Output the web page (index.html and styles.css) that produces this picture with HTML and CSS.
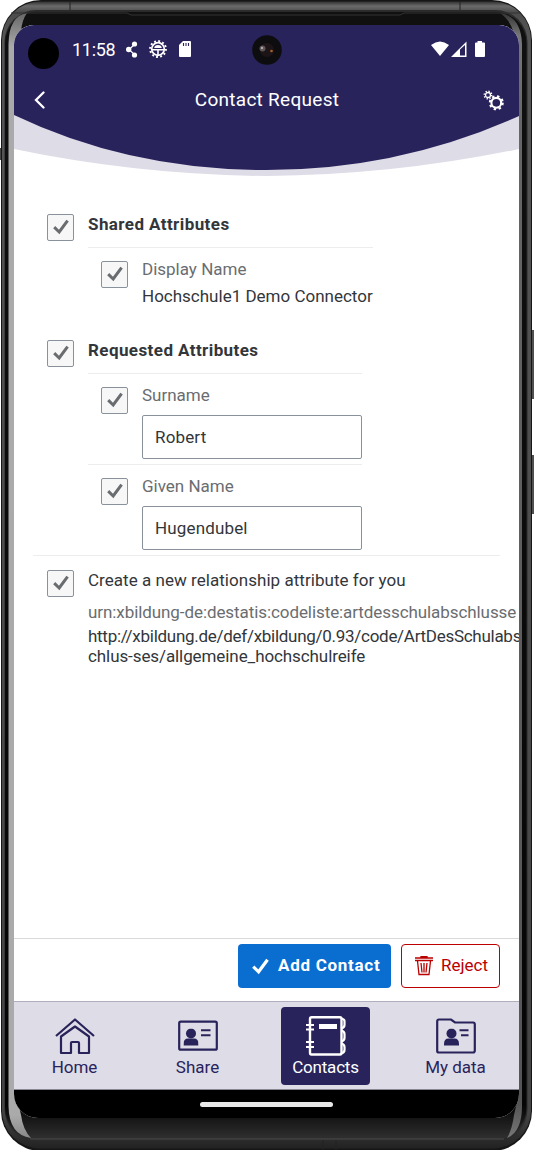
FILE: index.html
```html
<!DOCTYPE html>
<html lang="en">
<head>
<meta charset="utf-8">
<title>Contact Request</title>
<link rel="stylesheet" href="styles.css">
</head>
<body>
<svg width="0" height="0" class="defs" aria-hidden="true">
  <defs>
    <symbol id="check" viewBox="0 0 16 16"><path d="M1.200 8.200L6.200 13L14.600 1.600" fill="none" stroke="currentColor" stroke-width="3"/></symbol>
    <symbol id="person" viewBox="0 0 15 18"><circle cx="7.500" cy="5" r="5"/><path d="M0 17v-1.500q0-5.500 4.500-5.500h6q4.500 0 4.500 5.500v1.500z"/></symbol>
  </defs>
</svg>
<div class="phone">
  <svg class="frame" width="534" height="1150" viewBox="0 0 534 1150" aria-hidden="true">
    <defs>
      <linearGradient id="rim" x1="0" y1="0" x2="0" y2="1"><stop offset="0" stop-color="#303030"/><stop offset=".004" stop-color="#6b6b6b"/><stop offset=".009" stop-color="#4c4c4c"/><stop offset=".03" stop-color="#555"/><stop offset=".97" stop-color="#444"/><stop offset="1" stop-color="#222"/></linearGradient>
      <linearGradient id="base" x1="0" y1="0" x2="0" y2="1"><stop offset="0" stop-color="#101010"/><stop offset=".97" stop-color="#050505"/><stop offset="1" stop-color="#303030"/></linearGradient>
      <linearGradient id="glintL" x1="0" y1="0" x2="0" y2="1"><stop offset="0" stop-color="#666"/><stop offset=".03" stop-color="#aaa"/><stop offset=".98" stop-color="#aaa"/><stop offset="1" stop-color="#888"/></linearGradient>
      <linearGradient id="glintR" x1="0" y1="0" x2="0" y2="1"><stop offset="0" stop-color="#333"/><stop offset=".02" stop-color="#777"/><stop offset=".1" stop-color="#666"/><stop offset=".97" stop-color="#555"/><stop offset="1" stop-color="#777"/></linearGradient>
    </defs>
    <path d="M531 330h3v69h-3zM531 455h3v59h-3z" fill="#505050"/>
    <rect x="0" y="148" width="2" height="12" fill="#444"/>
    <rect x="1" y="0" width="531" height="1151" rx="40" fill="#161616"/>
    <rect x="2" y="1.500" width="529" height="1147" rx="38" fill="url(#rim)"/>
    <rect x="4.500" y="10" width="523" height="1131" rx="32" fill="#2b2b2b"/>
    <rect x="5" y="12" width="521.500" height="1127" rx="31" fill="url(#base)"/>
    <path d="M8.500 44Q9 16 27 13Q22 20 21 31L18 46V1102L21 1115Q23 1130 31 1138Q9 1135 8.500 1106z" fill="url(#glintL)"/>
    <path d="M522 44Q521 16 500 13Q510 20 513 31L517 46V1102L514 1115Q512 1130 507 1138Q522 1132 522 1106z" fill="url(#glintR)"/>
    <path d="M11 13H127L131 15H400L404 13H520" fill="none" stroke="#333"/>
    <path d="M70 2V10M460 2V10M323 1140V1150M336 1140V1150" stroke="#222"/>
    <path d="M30 1139H504" stroke="#4a4a4a"/>
  </svg>
  <main class="screen">
    <header class="top">
      <svg class="curve" width="505" height="152" viewBox="0 0 505 152" aria-hidden="true">
        <path d="M0 0H505V124Q380 150 252.500 151Q125 150 0 124z" fill="#dedce6"/>
        <path d="M0 0H505V91Q385 145 252.500 145Q115 145 0 90z" fill="#29235c"/>
      </svg>
      <div class="status">
        <i class="cutout"></i>
        <span class="clock">11:58</span>
        <svg class="st-share" width="12" height="17" viewBox="0 0 12 17" fill="#fff"><path d="M9 3L3 8.500L9 14" stroke="#fff" stroke-width="1.200" fill="none"/><circle cx="8.500" cy="3" r="2.600"/><circle cx="2.700" cy="8.500" r="2.700"/><circle cx="8.500" cy="14" r="2.600"/></svg>
        <svg class="st-bug" width="18" height="18" viewBox="0 0 18 18" fill="none" stroke="#fff"><circle cx="9" cy="9" r="7.900" stroke-width="2" stroke-dasharray="1.900 2.236"/><circle cx="9" cy="9" r="6.300" stroke-width="1.700"/><path d="M3 9.700H15M9 10V15" stroke-width="1.600"/><path d="M5.200 7.900q.3-2.900 3.800-2.900t3.800 2.900z" fill="#fff" stroke="none"/></svg>
        <svg class="st-card" width="12" height="16" viewBox="0 0 12 16"><path d="M4 0H11Q12 0 12 1V15Q12 16 11 16H1Q0 16 0 15V4z" fill="#fff"/><path d="M4.500 2V5M7 2V5M9.500 2V5" stroke="#29235c" stroke-width="1.100"/></svg>
        <svg class="camera" width="30" height="30" viewBox="0 0 30 30"><circle cx="15" cy="15" r="14.800" fill="#0d0d10"/><circle cx="15" cy="15" r="7" fill="#1d1417"/><circle cx="10.500" cy="13.500" r="3" fill="#5d5456"/><circle cx="10" cy="13" r="1.200" fill="#aaa"/><circle cx="19.500" cy="16" r="1.300" fill="#a66226"/></svg>
        <svg class="st-right" width="55" height="17" viewBox="0 0 55 17" fill="#fff"><path d="M0 4Q9-3 18 4L9 15z"/><path d="M20 16L35.500 .500V16zM29 8.500V14.500H34V4z" fill-rule="evenodd"/><path d="M46.500 0H51V1.500H53Q54 1.500 54 2.500V15Q54 16 53 16H45Q44 16 44 15V2.500Q44 1.500 45 1.500H46.500z"/></svg>
      </div>
      <div class="title">
        <svg width="12" height="18" viewBox="0 0 12 18"><path d="M9.500 1.500L2 9L9.500 16.500" fill="none" stroke="#fff" stroke-width="2.300" stroke-linecap="round"/></svg>
        <h1>Contact Request</h1>
        <svg width="21" height="21" viewBox="0 0 21 21" fill="none" stroke="#fff"><circle cx="5" cy="5" r="2.500" stroke-width="1.300"/><circle cx="5" cy="5" r="3.700" stroke-width="1.600" stroke-dasharray="1.300 1.606"/><circle cx="13.300" cy="12.800" r="4.900" stroke-width="2.100"/><circle cx="13.300" cy="12.800" r="6.500" stroke-width="2" stroke-dasharray="2.400 2.705"/></svg>
      </div>
    </header>
    <section class="content">
      <div class="row shared"><span class="box"><svg><use href="#check"/></svg></span><b>Shared Attributes</b></div>
      <div class="sub sub-shared">
        <div class="item"><span class="box"><svg><use href="#check"/></svg></span><div><label>Display Name</label><p>Hochschule1 Demo Connector</p></div></div>
      </div>
      <div class="row requested"><span class="box"><svg><use href="#check"/></svg></span><b>Requested Attributes</b></div>
      <div class="sub sub-req">
        <div class="item"><span class="box"><svg><use href="#check"/></svg></span><div><label>Surname</label><div class="input">Robert</div></div></div>
        <div class="item second"><span class="box"><svg><use href="#check"/></svg></span><div><label>Given Name</label><div class="input">Hugendubel</div></div></div>
      </div>
      <div class="relation">
        <span class="box"><svg><use href="#check"/></svg></span>
        <div class="rel-text">
          <p class="create">Create a new relationship attribute for you</p>
          <p class="urn">urn:xbildung-de:destatis:codeliste:artdesschulabschlusse</p>
          <p class="url"><span class="url-start">http://xbildung.de/def/xbildung/0.93/code/ArtDesSchulabs</span><br><span class="url-end">chlus-ses/allgemeine_hochschulreife</span></p>
        </div>
      </div>
    </section>
    <div class="actions">
      <div class="btn primary"><svg width="17" height="17"><use href="#check"/></svg><span>Add Contact</span></div>
      <div class="btn reject"><svg width="18" height="20" viewBox="0 0 18 20" fill="none" stroke="currentColor" stroke-width="1.300"><path d="M0 2H18M6 2V.7H12V2M0 4.500H18M2.500 5L4 18.500H14L15.500 5M6 7L7 16.500M9 7V16.500M12 7L11 16.500"/></svg><span>Reject</span></div>
    </div>
    <nav class="tabs">
      <div class="tab home"><svg width="40" height="40" viewBox="0 0 40 40" fill="none" stroke="currentColor" stroke-width="2.200" stroke-linejoin="round"><path d="M1 20L20 3.500L39 20"/><path d="M6 37V20.500L20 10.500L34 20.500V37H24V27Q24 26 23 26H17Q16 26 16 27V37z"/></svg><span>Home</span></div>
      <div class="tab share"><svg width="40" height="40" viewBox="0 0 40 40" fill="currentColor"><rect x="1.200" y="5.700" width="37.600" height="28" rx="1.500" fill="none" stroke="currentColor" stroke-width="2.200"/><use href="#person" x="5.500" y="12.500" width="15" height="18"/><path d="M23 14.200H32.500M23 19.300H32.500" stroke="currentColor" stroke-width="2.100"/></svg><span>Share</span></div>
      <div class="tab contacts"><svg width="40" height="40" viewBox="0 0 40 40" fill="none" stroke="currentColor" stroke-width="2.400"><path d="M4 36.500V3Q4 1.200 5.500 1.200H34Q35.500 1.200 35.500 3V36.500Q35.500 38.500 34 38.500H5.500Q4 38.500 4 36.500z"/><path d="M35 2.500Q38.500 3 38.500 5V9Q38.500 12 35 12.500M35 14.500Q38.500 15 38.500 18V22Q38.500 25 35 25.500M35 27.500Q38.500 28 38.500 31V34Q38.500 37 35 37.500" stroke-width="2.200"/><path d="M0 9H8M0 13.500H8M0 26H8M0 31H8" stroke-width="2"/><path d="M13 10.500H31" stroke-width="5"/></svg><span>Contacts</span></div>
      <div class="tab data"><svg width="40" height="40" viewBox="0 0 40 40" fill="currentColor"><path d="M1.200 35V5.500Q1.200 3.500 3 3.500H15L19 6.500H37Q38.800 6.500 38.800 8.500V34.500Q38.800 36.500 37 36.500H3Q1.200 36.500 1.200 35z" fill="none" stroke="currentColor" stroke-width="2.200"/><use href="#person" x="8" y="12.500" width="15" height="18"/><path d="M23.500 14.200H32.500M25 19.300H32.500" stroke="currentColor" stroke-width="2.100"/></svg><span>My data</span></div>
    </nav>
    <footer class="gesture"><i></i></footer>
  </main>
</div>
</body>
</html>
```
FILE: styles.css
```css
* { box-sizing: border-box; }
body { margin: 0; background: #fff; font: 17px/22px Roboto, "Noto Sans", sans-serif; color: #32363a; }
p, h1 { margin: 0; }
.defs { position: absolute; }
.phone { position: relative; width: 534px; height: 1150px; padding: 25px 15px 32px 14px; overflow: hidden; }
.frame { position: absolute; left: 0; top: 0; }
.screen { position: relative; height: 1093px; display: flex; flex-direction: column; background: #fff; border-radius: 20px 20px 24px 24px; overflow: hidden; white-space: nowrap; }
.top { height: 152px; position: relative; color: #fff; }
.curve { position: absolute; left: 0; top: 0; }
.status { position: relative; display: flex; height: 50px; }
.cutout { width: 31px; height: 31px; border-radius: 50%; background: #000; margin: 13px 0 0 14px; }
.clock { margin: 13px 0 0 13px; font: 18px/24px Roboto, sans-serif; letter-spacing: -.3px; width: 43px; }
.st-share { margin: 16px 0 0 11px; }
.st-bug { margin: 15px 0 0 11px; }
.st-card { margin: 16px 0 0 12px; }
.camera { margin: 10px 0 0 61px; }
.st-right { margin: 16px 0 0 149px; }
.title { position: relative; display: flex; justify-content: space-between; align-items: center; height: 50px; padding: 0 15px 0 20px; }
.title h1 { font-size: 19px; font-weight: 400; letter-spacing: .28px; padding-left: 5px; }
.content { height: 761px; padding: 0 0 0 19px; }
.row { display: flex; padding-left: 14px; gap: 14px; }
.box { flex: none; width: 27px; height: 27px; border: 1px solid #89919a; border-radius: 2px; background: #f7f7f7; color: #6a6d70; padding: 4px 0 0 5px; }
.box svg { display: block; width: 16px; height: 16px; }
.row b { letter-spacing: .42px; }
.shared { padding-top: 37px; height: 70px; }
.shared b, .requested b { margin-top: -1px; }
.sub { margin-left: 55px; border-top: 1px solid #ededed; }
.sub-shared { width: 285px; height: 93px; }
.requested { height: 33px; }
.sub-req { width: 274px; }
.item { display: flex; gap: 14px; padding: 13px 0 0 13px; height: 90px; }
.item > div { margin-top: -3px; flex: 1; }
label { display: block; color: #6a6d70; }
.item p { margin-top: 5px; }
.input { height: 44px; margin-top: 9px; border: 1px solid #89919a; border-radius: 2px; background: #fff; padding: 10px 12px; letter-spacing: .15px; }
.second { border-top: 1px solid #ededed; height: 91px; }
.relation { display: flex; gap: 14px; border-top: 1px solid #ededed; width: 467px; padding: 14px 0 0 14px; }
.rel-text { margin-top: -1px; }
.create { letter-spacing: .04px; }
.urn { color: #6a6d70; margin-top: 10px; letter-spacing: -.08px; }
.url { line-height: 20px; margin-top: 3px; }
.url-start { letter-spacing: -.28px; }
.url-end { letter-spacing: -.09px; }
.actions { display: flex; justify-content: flex-end; gap: 10px; height: 63px; padding: 5px 19px 0 0; border-top: 1px solid #d9d9d9; }
.btn { display: flex; align-items: center; height: 44px; border-radius: 4px; }
.btn span { margin-top: -2px; }
.primary { width: 153px; background: #0a6ed1; color: #fff; font-weight: 700; padding-left: 14px; gap: 9px; letter-spacing: .72px; }
.reject { width: 99px; border: 1px solid #b00; color: #b00; padding-left: 13px; gap: 8px; }
.tabs { height: 89px; background: #dedce6; border-top: 1px solid #b2aec0; border-bottom: 1px solid #898793; display: flex; padding: 5px 0 4px 16px; color: #29235c; }
.tab { width: 89px; height: 78px; display: flex; flex-direction: column; align-items: center; padding-top: 9px; border-radius: 4px; }
.tab svg { display: block; flex: none; }
.share { margin-left: 34px; }
.contacts { margin-left: 39px; background: #29235c; color: #fff; letter-spacing: -.2px; }
.data { margin-left: 41px; }
.gesture { height: 28px; background: #000; padding-top: 12px; }
.gesture i { display: block; width: 133px; height: 5px; border-radius: 3px; background: #e8e8e8; margin-left: 186px; }
```
